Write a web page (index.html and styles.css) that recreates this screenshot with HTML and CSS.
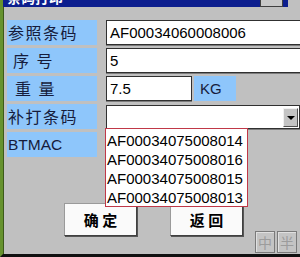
FILE: index.html
```html
<!DOCTYPE html>
<html>
<head>
    <title>条码打印</title>
    <link rel="stylesheet" href="styles.css">
</head>
<body>
    <div class="window">
        <div class="titlebar">
            <span class="title">条码打印</span>
            <span class="title-btn"></span>
        </div>
        <div class="content">
            <div class="form">
                <div class="row">
                    <div class="label">参照条码</div>
                    <div class="field wide">AF00034060008006</div>
                </div>
                <div class="row">
                    <div class="label indent">序&nbsp;号</div>
                    <div class="field wide">5</div>
                </div>
                <div class="row">
                    <div class="label indent2">重&nbsp;量</div>
                    <div class="unit-row">
                        <div class="field short">7.5</div>
                        <div class="unit">KG</div>
                    </div>
                </div>
                <div class="row">
                    <div class="label">补打条码</div>
                    <div class="field combo">
                        <span class="combo-btn"></span>
                        <ul class="droplist">
                            <li>AF00034075008014</li>
                            <li>AF00034075008016</li>
                            <li>AF00034075008015</li>
                            <li>AF00034075008013</li>
                        </ul>
                    </div>
                </div>
                <div class="row">
                    <div class="label latin">BTMAC</div>
                    <div></div>
                </div>
            </div>
            <div class="actions">
                <button class="btn">确&nbsp;定</button>
                <button class="btn">返&nbsp;回</button>
            </div>
            <div class="ime">
                <span class="ime-key">中</span>
                <span class="ime-key">半</span>
            </div>
        </div>
    </div>
</body>
</html>
```

FILE: styles.css
```css
body {
    margin: 0;
    font-family: "Liberation Sans", Arial, sans-serif;
}
.window {
    position: relative;
    width: 300px;
    height: 257px;
    box-sizing: border-box;
    background: #c0c0c0;
    border-left: 3px solid #66922e;
    border-bottom: 3px solid #101010;
    box-shadow: inset 1px 0 #3c5a1a;
    overflow: hidden;
}
.titlebar {
    display: flex;
    align-items: flex-start;
    height: 7px;
    margin-right: 12px;
    background: #0c1e8e;
    overflow: hidden;
}
.title {
    margin-top: -11px;
    padding-left: 4px;
    color: #fff;
    font: bold 14px "Noto Sans CJK SC", sans-serif;
    line-height: 16px;
}
.title-btn {
    margin-left: auto;
    margin-right: 5px;
    width: 21px;
    height: 6px;
    background: #c8c8c8;
    border: 1px solid #404040;
    border-top: none;
}
.content {
    padding: 13px 0 0 4px;
}
.form {
    display: flex;
    flex-direction: column;
    gap: 3px;
}
.row {
    display: grid;
    grid-template-columns: 90px 1fr;
    column-gap: 9px;
    height: 25px;
}
.label {
    background: #8ec6fb;
    color: #161c3c;
    font: 16px "Noto Sans CJK SC", sans-serif;
    letter-spacing: 1.5px;
    line-height: 25px;
    padding-left: 1px;
}
.label.indent {
    padding-left: 6px;
    letter-spacing: 2px;
}
.label.indent2 {
    padding-left: 8px;
    letter-spacing: 2px;
}
.label.latin {
    font: 15.5px "Liberation Sans", Arial, sans-serif;
    letter-spacing: 0;
    line-height: 25px;
}
.field {
    position: relative;
    box-sizing: border-box;
    height: 25px;
    background: #fff;
    border: 1px solid #303030;
    box-shadow: 0 1px #7c7c7c;
    font-size: 15px;
    line-height: 23px;
    padding-left: 3px;
    color: #000;
}
.field.wide {
    margin-right: -6px;
}
.unit-row {
    display: flex;
    gap: 2px;
}
.field.short {
    width: 86px;
}
.unit {
    width: 42px;
    height: 25px;
    background: #8ec6fb;
    color: #161c3c;
    font-size: 15px;
    line-height: 25px;
    padding-left: 6px;
    box-sizing: border-box;
}
.combo {
    height: 24px;
    margin-top: 1px;
}
.combo-btn {
    position: absolute;
    right: 1px;
    top: 2px;
    width: 15px;
    height: 19px;
    box-sizing: border-box;
    background: #c4c4c4;
    border: 1px solid #f0f0f0;
    border-right-color: #505050;
    border-bottom-color: #505050;
}
.combo-btn::after {
    content: "";
    position: absolute;
    left: 3px;
    top: 7px;
    border-left: 4px solid transparent;
    border-right: 4px solid transparent;
    border-top: 4px solid #000;
}
.droplist {
    position: absolute;
    left: -2px;
    top: 100%;
    width: 143px;
    margin: 0;
    padding: 2px 0 0 1px;
    list-style: none;
    box-sizing: border-box;
    height: 79px;
    background: #fff;
    border: 1px solid #c03848;
    z-index: 2;
}
.droplist li {
    height: 19px;
    line-height: 19px;
    font-size: 15px;
    color: #000;
}
.actions {
    display: flex;
    gap: 33px;
    margin-top: 46px;
    padding-left: 57px;
}
.btn {
    width: 73px;
    height: 33px;
    background: #fafafa;
    border: 1px solid #9a9a9a;
    border-right-color: #404040;
    border-bottom-color: #404040;
    box-shadow: 1px 1px 0 #555;
    font: bold 15px "Noto Sans CJK SC", sans-serif;
    color: #000;
    padding: 0;
}
.ime {
    position: absolute;
    right: 3px;
    bottom: 1px;
    display: flex;
    gap: 2px;
}
.ime-key {
    width: 20px;
    height: 22px;
    box-sizing: border-box;
    border: 1px solid #7a7a7a;
    box-shadow: inset 1px 1px #e0e0e0;
    background: #c4c4c4;
    color: #9c9c9c;
    font: 14px "Noto Sans CJK SC", sans-serif;
    line-height: 20px;
    text-align: center;
}
```
